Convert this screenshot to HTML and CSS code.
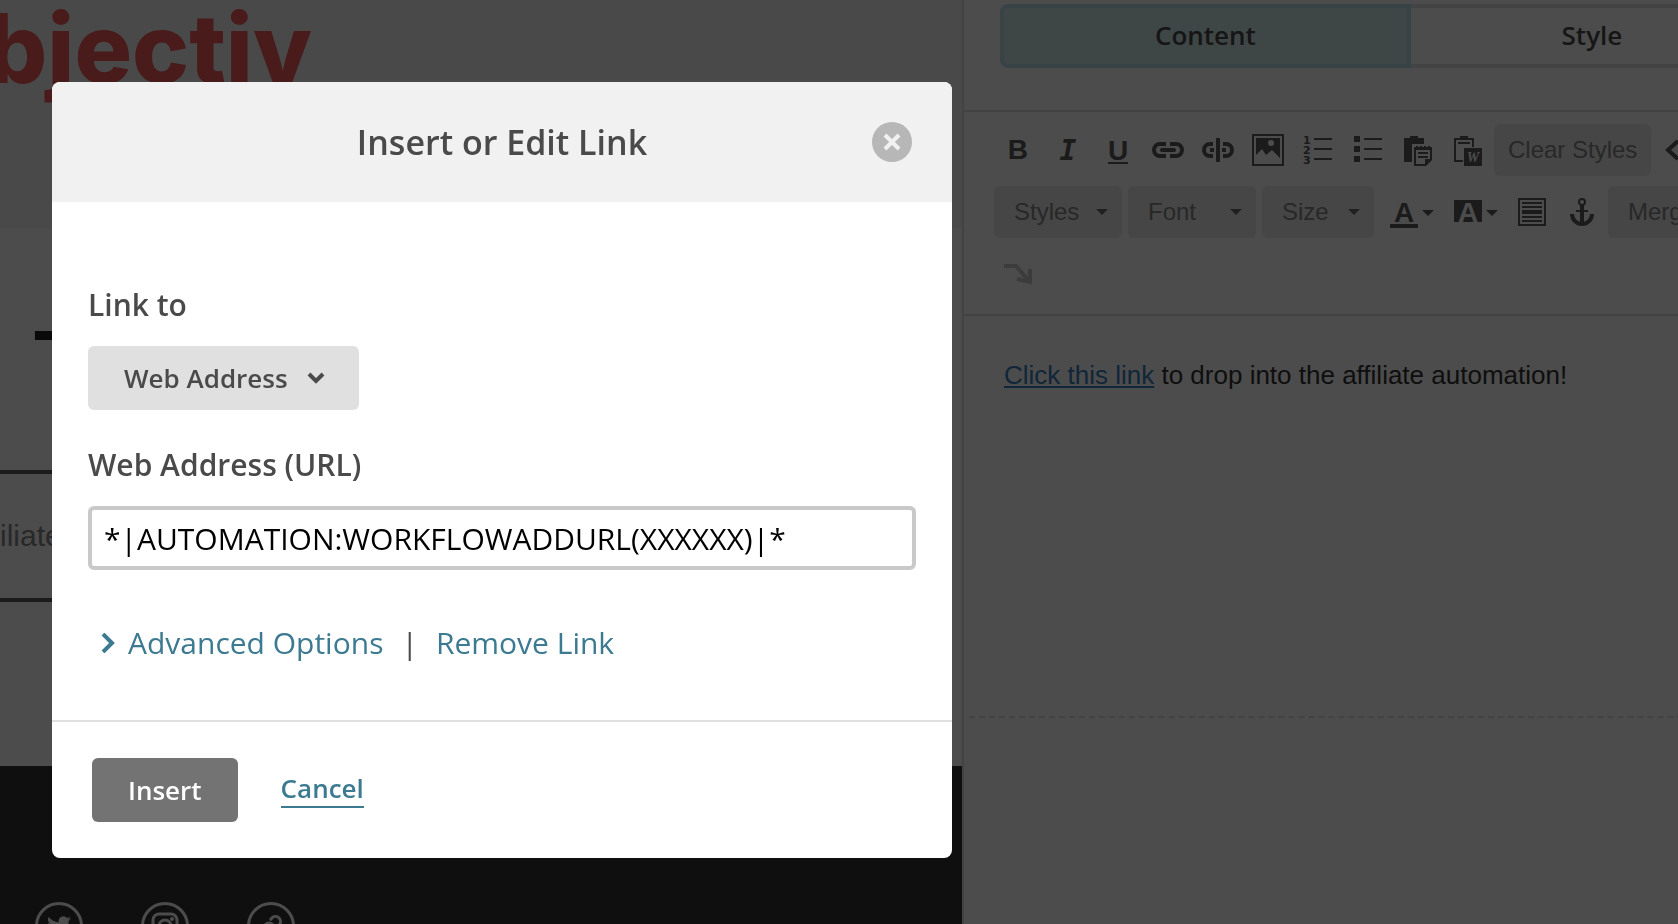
FILE: index.html
```html
<!DOCTYPE html>
<html lang="en">
<head>
  <meta charset="UTF-8">
  <meta name="viewport" content="width=device-width, initial-scale=1.0">
  <title>Insert or Edit Link</title>
  <link rel="stylesheet" href="styles.css">
</head>
<body>
  <div class="app">
    <main class="preview">
      <div class="preview-header">
        <span class="logo">bjectiv</span>
      </div>
      <div class="preview-body">
        <h1>T</h1>
        <div class="preview-row">iliate</div>
      </div>
      <div class="preview-footer">
        <a href="#" class="social" aria-label="Twitter">
          <svg width="24" height="24" viewBox="0 0 24 24" fill="currentColor"><path d="M24 4.6a10 10 0 0 1-2.8.8 5 5 0 0 0 2.1-2.7 10 10 0 0 1-3.1 1.2 4.9 4.9 0 0 0-8.4 4.5A14 14 0 0 1 1.700 3.100a4.900 4.900 0 0 0 1.500 6.600 5 5 0 0 1-2.200-.6 4.900 4.900 0 0 0 3.900 4.900 5 5 0 0 1-2.200.1 4.900 4.900 0 0 0 4.600 3.400A10 10 0 0 1 0 19.500a14 14 0 0 0 21.500-12.400A10 10 0 0 0 24 4.600z"/></svg>
        </a>
        <a href="#" class="social" aria-label="Instagram">
          <svg width="28" height="28" viewBox="0 0 28 28" fill="none" stroke="currentColor" stroke-width="3"><rect x="2" y="2" width="24" height="24" rx="6"/><circle cx="14" cy="14" r="6"/><circle cx="21" cy="7" r="2" fill="currentColor" stroke="none"/></svg>
        </a>
        <a href="#" class="social" aria-label="Website">
          <svg width="24" height="24" viewBox="0 0 24 24" fill="none" stroke="currentColor" stroke-width="3" stroke-linecap="round"><path d="M10 13a5 5 0 0 0 7.500.5l3-3a5 5 0 0 0-7-7l-1.700 1.700"/><path d="M14 11a5 5 0 0 0-7.500-.5l-3 3a5 5 0 0 0 7 7l1.700-1.700"/></svg>
        </a>
      </div>
    </main>

    <aside class="panel">
      <div class="tabs">
        <button type="button" class="tab active">Content</button>
        <button type="button" class="tab">Style</button>
      </div>

      <div class="toolbar">
        <div class="tool-row">
          <button type="button" class="tool letter bold" aria-label="Bold">B</button>
          <button type="button" class="tool letter italic" aria-label="Italic">I</button>
          <button type="button" class="tool" aria-label="Underline">
            <svg class="icon" viewBox="0 0 32 32"><text class="glyph" x="16" y="26" text-anchor="middle">U</text><path d="M6 28h20v2H6z"/></svg>
          </button>
          <button type="button" class="tool" aria-label="Link">
            <svg class="icon line" viewBox="0 0 32 32"><path d="M14 10H8a6 6 0 0 0 0 12h6M18 10h6a6 6 0 0 1 0 12h-6"/><path d="M10 16h12" stroke-linecap="round"/></svg>
          </button>
          <button type="button" class="tool" aria-label="Unlink">
            <svg class="icon line" viewBox="0 0 32 32"><path d="M11 10H8a6 6 0 0 0 0 12h3M21 10h3a6 6 0 0 1 0 12h-3M16 4v24M8 16h4M20 16h4"/></svg>
          </button>
          <button type="button" class="tool" aria-label="Image">
            <svg class="icon" viewBox="0 0 32 32"><path fill-rule="evenodd" d="M0 0h32v32H0zM2 2v28h28V2z"/><path fill-rule="evenodd" d="M4 4h24v20l-8-8-6 5-4-6-6 6zM19 6a3 3 0 1 0 0 6 3 3 0 0 0 0-6z"/></svg>
          </button>
          <button type="button" class="tool" aria-label="Numbered list">
            <svg class="icon" viewBox="0 0 32 32"><path d="M12 4h18v2H12zM12 14h18v2H12zM12 24h18v2H12z"/><text class="digit" x="1" y="10">1</text><text class="digit" x="1" y="20">2</text><text class="digit" x="1" y="30">3</text></svg>
          </button>
          <button type="button" class="tool" aria-label="Bulleted list">
            <svg class="icon" viewBox="0 0 32 32"><path d="M12 4h18v2H12zM12 14h18v2H12zM12 24h18v2H12zM2 2h6v6H2zM2 12h6v6H2zM2 22h6v6H2z"/></svg>
          </button>
          <button type="button" class="tool" aria-label="Paste as plain text">
            <svg class="icon" viewBox="0 0 32 32"><path d="M2 4h6V2h8v2h6v6H10v18H2z"/><path fill-rule="evenodd" d="M12 13h2v-1h2v1h2v-1h2v1h2v-1h2v1h2v-1h2v1h2v13l-6 6H12zM14 16v14h9v-5h5v-9z"/><path d="M16 18h10v2H16zM16 22h10v2H16z"/></svg>
          </button>
          <button type="button" class="tool" aria-label="Paste from Word">
            <svg class="icon" viewBox="0 0 32 32"><path d="M2 4h6V2h8v2h6v9h-2V6H4v20h7v2H2z"/><path d="M6 8h12v2H6zM12 14h18v18H12z"/><text class="word" x="21" y="28" text-anchor="middle">W</text></svg>
          </button>
          <button type="button" class="text-btn">Clear Styles</button>
          <button type="button" class="tool" aria-label="Source code">
            <svg class="icon line" viewBox="0 0 32 32"><path d="M13 7L3 16l10 9M19 7l10 9-10 9"/></svg>
          </button>
        </div>

        <div class="tool-row">
          <div class="dropdown wide">
            <select aria-label="Styles"><option>Styles</option></select>
            <svg class="caret" viewBox="0 0 12 6"><path d="M0 0h12L6 6z"/></svg>
          </div>
          <div class="dropdown wide">
            <select aria-label="Font"><option>Font</option></select>
            <svg class="caret" viewBox="0 0 12 6"><path d="M0 0h12L6 6z"/></svg>
          </div>
          <div class="dropdown narrow">
            <select aria-label="Size"><option>Size</option></select>
            <svg class="caret" viewBox="0 0 12 6"><path d="M0 0h12L6 6z"/></svg>
          </div>
          <button type="button" class="tool color" aria-label="Text color">
            <svg class="icon-wide" viewBox="0 0 44 32"><text class="glyph" x="14" y="26" text-anchor="middle">A</text><path d="M0 28h28v4H0zM32 14h12l-6 6z"/></svg>
          </button>
          <button type="button" class="tool color" aria-label="Background color">
            <svg class="icon-wide" viewBox="0 0 44 32"><path d="M0 4h28v22H0zM32 14h12l-6 6z"/><text class="glyph knockout" x="14" y="26" text-anchor="middle">A</text></svg>
          </button>
          <button type="button" class="tool" aria-label="Alignment">
            <svg class="icon" viewBox="0 0 32 32"><path fill-rule="evenodd" d="M2 2h28v28H2zM4 4v24h24V4z"/><path d="M6 6h20v2H6zM6 10h20v2H6zM6 14h20v4H6zM6 20h20v2H6zM6 24h20v2H6z"/></svg>
          </button>
          <button type="button" class="tool" aria-label="Anchor">
            <svg class="icon line" viewBox="0 0 32 32"><circle cx="16" cy="6" r="3" stroke-width="2"/><path d="M16 9v19M6 18a10 10 0 0 0 20 0"/><path d="M10 15h12" stroke-width="2"/></svg>
          </button>
          <div class="dropdown merge">
            <select aria-label="Merge Tags"><option>Merge Tags</option></select>
            <svg class="caret" viewBox="0 0 12 6"><path d="M0 0h12L6 6z"/></svg>
          </div>
        </div>

        <div class="tool-row">
          <button type="button" class="tool disabled" aria-label="Expand toolbar">
            <svg class="icon line" viewBox="0 0 32 32"><path d="M2 8h12l13 15M15 21l13 3V11"/></svg>
          </button>
        </div>
      </div>

      <div class="editor">
        <p><a href="#">Click this link</a> to drop into the affiliate automation!</p>
      </div>
    </aside>
  </div>

  <div class="overlay">
    <form class="modal" role="dialog" aria-labelledby="modalTitle">
      <header class="modal-header">
        <h2 id="modalTitle">Insert or Edit Link</h2>
        <button type="button" class="close" aria-label="Close">
          <svg width="20" height="20" viewBox="0 0 20 20" fill="none" stroke="currentColor" stroke-width="4"><path d="M3 3l14 14M17 3L3 17"/></svg>
        </button>
      </header>

      <div class="modal-body">
        <label for="linkType">Link to</label>
        <div class="link-type">
          <select id="linkType"><option>Web Address</option></select>
          <svg width="18" height="12" viewBox="0 0 18 12" fill="none" stroke="currentColor" stroke-width="4"><path d="M2 2l7 7 7-7"/></svg>
        </div>

        <label for="linkUrl">Web Address (URL)</label>
        <input type="text" id="linkUrl" value="*|AUTOMATION:WORKFLOWADDURL(XXXXXX)|*">

        <div class="link-options">
          <a href="#" class="advanced">
            <svg width="16" height="20" viewBox="0 0 16 20" fill="none" stroke="currentColor" stroke-width="4"><path d="M3 1l9 9-9 9"/></svg>
            Advanced Options
          </a>
          <span>|</span>
          <a href="#">Remove Link</a>
        </div>
      </div>

      <footer class="modal-footer">
        <button type="submit" class="insert">Insert</button>
        <a href="#" class="cancel">Cancel</a>
      </footer>
    </form>
  </div>
</body>
</html>
```

FILE: styles.css
```css
* {
  box-sizing: border-box;
}

body {
  margin: 0;
  background: #fff;
  color: #4a4a4a;
  font-family: "Open Sans", "Noto Sans", sans-serif;
  overflow: hidden;
}

button, select, input {
  font-family: inherit;
  margin: 0;
}

button, select {
  border: none;
  cursor: pointer;
}

h1, h2, p {
  margin: 0;
}

.app, .overlay {
  display: grid;
  grid-template-columns: 57.33% 1fr;
  height: 100vh;
}

/* Email preview */
.preview {
  display: flex;
  flex-direction: column;
  min-width: 0;
  overflow: hidden;
  font-family: "Liberation Sans", Arial, sans-serif;
}

.preview-header {
  flex: none;
  height: 229px;
  background: #f4f4f4;
}

.logo {
  display: block;
  margin-left: -14px;
  color: #f35a5a;
  font-family: Inter, sans-serif;
  font-size: 96px;
  font-weight: 800;
  line-height: 96px;
}

.preview-body {
  flex: none;
  height: 537px;
  padding-top: 84px;
}

.preview h1 {
  padding-left: 34px;
  color: #222;
  font-size: 80px;
  line-height: 92px;
}

.preview-row {
  height: 132px;
  margin: 65px 52px 0 0;
  border-top: 4px solid #5a5a5a;
  border-bottom: 4px solid #5a5a5a;
  color: #888;
  font-size: 30px;
  line-height: 124px;
}

.preview-footer {
  flex: 1;
  display: flex;
  gap: 58px;
  padding: 136px 35px 0;
  background: #333;
}

.social {
  flex: none;
  display: flex;
  align-items: center;
  justify-content: center;
  width: 48px;
  height: 48px;
  border: 3px solid #fff;
  border-radius: 50%;
  color: #fff;
}

/* Content editor */
.panel {
  min-width: 0;
  overflow: hidden;
  border-left: 2px solid #e0e0e0;
}

.tabs {
  display: flex;
  padding: 4px 0 42px 36px;
  border-bottom: 2px solid #e0e0e0;
}

.tab {
  flex: 0 0 54%;
  height: 64px;
  padding: 0 0 2px;
  border: 4px solid #e0e0e0;
  border-left: none;
  background: #fff;
  color: #4a4a4a;
  font-size: 26px;
  font-weight: 600;
}

.tab.active {
  flex-basis: 60.6%;
  border: 4px solid #bbe0ec;
  border-radius: 8px 0 0 8px;
  background: #d3e9ec;
}

.toolbar {
  display: flex;
  flex-direction: column;
  gap: 10px;
  padding: 12px 0 14px 30px;
  border-bottom: 2px solid #e0e0e0;
  color: #5a5a5a;
  font-family: "Liberation Sans", Arial, sans-serif;
}

.tool-row {
  display: flex;
  gap: 2px;
  height: 52px;
}

.tool {
  flex: none;
  display: flex;
  align-items: center;
  justify-content: center;
  width: 48px;
  padding: 0;
  background: none;
  color: inherit;
}

.tool.color {
  width: 62px;
  padding-left: 2px;
}

.tool.disabled {
  color: #c8c8c8;
}

.letter {
  font-size: 28px;
  font-weight: bold;
}

.italic {
  font-family: "DejaVu Sans Mono", monospace;
  font-style: italic;
}

.icon, .icon-wide {
  width: 32px;
  height: 32px;
  fill: currentColor;
}

.icon-wide {
  width: 44px;
}

.icon.line {
  fill: none;
  stroke: currentColor;
  stroke-width: 4px;
}

.glyph {
  font: bold 28px "Liberation Sans", Arial, sans-serif;
}

.knockout {
  fill: #fff;
}

.digit {
  font: bold 11px "DejaVu Sans", sans-serif;
}

.word {
  fill: #fff;
  font: italic bold 14px "Liberation Serif", serif;
}

.text-btn, .dropdown {
  flex: none;
  margin-right: 4px;
  border-radius: 6px;
  background: #ebebeb;
  color: #888;
  font-size: 24px;
}

.text-btn {
  padding: 0 14px;
}

.dropdown, .link-type {
  display: grid;
  align-items: center;
}

.dropdown select, .dropdown svg,
.link-type select, .link-type svg {
  grid-area: 1 / 1;
}

.dropdown select, .link-type select {
  appearance: none;
  width: 100%;
  height: 100%;
  background: none;
  color: inherit;
  font-size: inherit;
  font-weight: inherit;
}

.dropdown select {
  padding: 0 30px 2px 20px;
}

.dropdown svg, .link-type svg {
  justify-self: end;
  pointer-events: none;
}

.wide {
  width: 128px;
}

.narrow {
  width: 112px;
}

.merge {
  width: 190px;
}

.caret {
  width: 12px;
  height: 6px;
  margin-right: 14px;
  fill: #6b6b6b;
}

.editor {
  height: 402px;
  margin-left: 2px;
  padding: 42px 38px;
  border-bottom: 2px dashed #e0e0e0;
  border-bottom-left-radius: 2px;
  color: #333;
  font-family: "Liberation Sans", Arial, sans-serif;
  font-size: 26px;
  line-height: 34px;
  white-space: nowrap;
}

.editor a {
  color: #3a7fbd;
}

/* Link modal */
.overlay {
  position: fixed;
  inset: 0;
  align-items: start;
  background: rgba(0, 0, 0, 0.7);
}

.modal {
  margin: 82px 10px 0 52px;
  border-radius: 8px;
  background: #fff;
  overflow: hidden;
}

.modal-header {
  display: grid;
  grid-template-columns: 40px 1fr 40px;
  align-items: center;
  height: 120px;
  padding: 0 40px;
  background: #f1f1f1;
}

.modal-header h2 {
  grid-column: 2;
  font-size: 34px;
  font-weight: 600;
  line-height: 44px;
  text-align: center;
}

.close {
  display: flex;
  align-items: center;
  justify-content: center;
  width: 40px;
  height: 40px;
  padding: 0;
  border-radius: 50%;
  background: #b7b7b7;
  color: #f1f1f1;
}

.modal-body {
  padding: 82px 36px 56px;
  font-size: 30px;
  line-height: 42px;
}

.modal-body label {
  display: block;
  margin-bottom: 20px;
  font-weight: 600;
}

.link-type {
  width: 271px;
  height: 64px;
  margin-bottom: 34px;
  border-radius: 6px;
  background: #e0e0e0;
  font-size: 26px;
  font-weight: 600;
}

.link-type select {
  padding: 0 60px 0 36px;
}

.link-type svg {
  margin-right: 34px;
}

.modal-body input {
  display: block;
  width: 100%;
  height: 64px;
  padding: 0 12px;
  border: 4px solid #c9c9c9;
  border-radius: 6px;
  color: #000;
  font-size: 30px;
}

.link-options {
  display: flex;
  gap: 18px;
  margin-top: 52px;
  padding-left: 12px;
}

.link-options a {
  color: #3c7a91;
  text-decoration: none;
}

.advanced {
  display: flex;
  align-items: center;
  gap: 12px;
}

.modal-footer {
  display: flex;
  align-items: center;
  gap: 43px;
  padding: 36px 40px;
  border-top: 2px solid #e0e0e0;
  font-size: 26px;
  font-weight: 600;
}

.insert {
  height: 64px;
  padding: 0 36px;
  border-radius: 6px;
  background: #737373;
  color: #fff;
  font-size: inherit;
  font-weight: inherit;
}

.cancel {
  padding-bottom: 2px;
  border-bottom: 2px solid #3c7a91;
  color: #3c7a91;
  line-height: 32px;
  text-decoration: none;
}
```
